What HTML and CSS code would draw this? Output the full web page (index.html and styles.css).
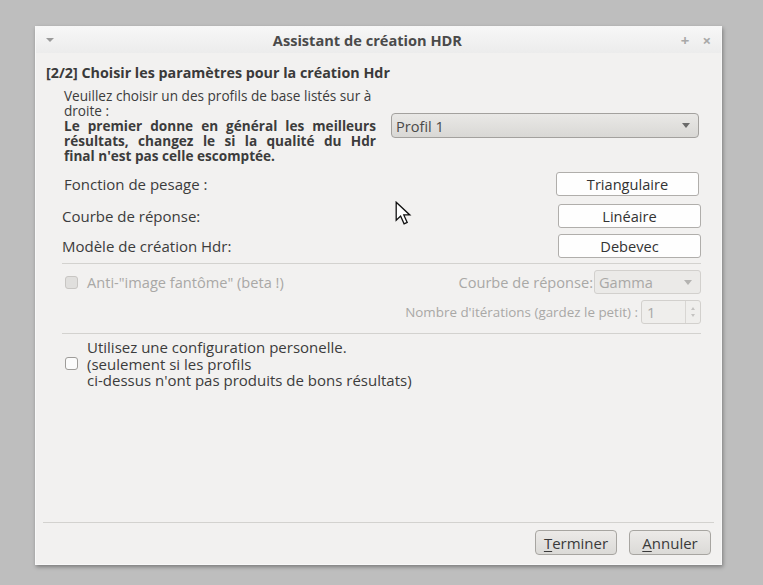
FILE: index.html
```html
<!DOCTYPE html>
<html lang="fr">
<head>
<meta charset="utf-8">
<title>Assistant de création HDR</title>
<link rel="stylesheet" href="styles.css">
</head>
<body>
<div class="window">
  <div class="titlebar">
    <span class="tb-menu"></span>
    <span class="tb-title">Assistant de création HDR</span>
    <span class="tb-btns"><span class="tb-plus">+</span><span class="tb-close">×</span></span>
  </div>
  <div class="content">
    <div class="header">[2/2] Choisir les paramètres pour la création Hdr</div>
    <div class="main">
      <div class="top">
        <div class="intro">
          <div class="intro-plain">Veuillez choisir un des profils de base listés sur à droite :</div>
          <div class="intro-bold">
            <div class="jl">Le premier donne en général les meilleurs</div>
            <div class="jl">résultats, changez le si la qualité du Hdr</div>
            <div>final n'est pas celle escomptée.</div>
          </div>
        </div>
        <div class="combo"><span>Profil 1</span><span class="arrow"></span></div>
      </div>
      <div class="row row1"><span class="lbl">Fonction de pesage :</span><span class="btn">Triangulaire</span></div>
      <div class="row row2"><span class="lbl">Courbe de réponse:</span><span class="btn">Linéaire</span></div>
      <div class="row row3"><span class="lbl">Modèle de création Hdr:</span><span class="btn">Debevec</span></div>
      <div class="sep"></div>
      <div class="ghost">
        <div class="ghost-row1">
          <span class="check dis"></span>
          <span class="dis-txt ghost-lbl">Anti-"image fantôme" (beta !)</span>
          <span class="dis-txt">Courbe de réponse:</span>
          <span class="combo-dis"><span>Gamma</span><span class="arrow dis-arrow"></span></span>
        </div>
        <div class="ghost-row2">
          <span class="dis-txt">Nombre d'itérations (gardez le petit) :</span>
          <span class="spin"><span class="spin-val">1</span><span class="spin-btns"><span class="up"></span><span class="down"></span></span></span>
        </div>
      </div>
      <div class="sep"></div>
      <div class="custom">
        <span class="check"></span>
        <span class="custom-txt">Utilisez une configuration personelle.<br>(seulement si les profils<br>ci-dessus n'ont pas produits de bons résultats)</span>
      </div>
    </div>
    <div class="footer">
      <span class="fbtn"><u>T</u>erminer</span>
      <span class="fbtn"><u>A</u>nnuler</span>
    </div>
  </div>
</div>
<svg class="cursor" width="18" height="25" viewBox="0 0 18 25">
  <path d="M1.2 1.2 L1.2 19.2 L5.6 15 L9.1 22.8 L12.2 21.4 L8.8 13.9 L14.8 13.9 Z" fill="#fff" stroke="#111" stroke-width="1.3" stroke-linejoin="miter"/>
</svg>
</body>
</html>
```
FILE: styles.css
```css
html, body {
  margin: 0;
  padding: 0;
}
body {
  background: #bebebe;
  width: 763px;
  height: 585px;
  overflow: hidden;
  font-family: "Open Sans", "DejaVu Sans", sans-serif;
  color: #3c3c3c;
  position: relative;
}
.window {
  margin: 26px 0 0 35px;
  width: 687px;
  height: 539px;
  background: #f2f1f0;
  box-shadow: 1px 2px 4px rgba(0,0,0,0.35);
  display: flex;
  flex-direction: column;
  box-sizing: border-box;
  border: 1px solid #f8f8f8;
  border-top: none;
}
.titlebar {
  height: 27px;
  flex: none;
  background: linear-gradient(#f7f7f7, #ececec);
  display: flex;
  align-items: center;
  padding: 0 10px;
}
.tb-menu {
  width: 0;
  height: 0;
  border-left: 4px solid transparent;
  border-right: 4px solid transparent;
  border-top: 4px solid #9a9a9a;
  margin-top: 1px;
}
.tb-title {
  flex: 1;
  text-align: center;
  font-weight: bold;
  font-size: 14.6px;
  color: #4a4a4a;
}
.tb-btns {
  display: flex;
  gap: 13px;
  color: #a8a8a8;
  font-size: 15px;
  font-weight: bold;
}
.content {
  flex: 1;
  display: flex;
  flex-direction: column;
}
.header {
  font-weight: bold;
  font-size: 14.3px;
  color: #3a3a3a;
  padding: 10px 0 0 10px;
  line-height: 19px;
}
.main {
  flex: 1;
  padding: 6px 20px 0 26px;
}
.top {
  display: flex;
  align-items: center;
  justify-content: space-between;
  padding-left: 2px;
  padding-right: 2px;
}
.intro {
  width: 312px;
  font-size: 13.6px;
  line-height: 15px;
}
.intro-bold {
  font-weight: bold;
}
.jl {
  text-align: justify;
  text-align-last: justify;
}
.combo {
  width: 308px;
  height: 25px;
  box-sizing: border-box;
  border: 1px solid #a3a19e;
  border-radius: 4px;
  background: linear-gradient(#e9e8e6, #d9d8d5);
  display: flex;
  align-items: center;
  justify-content: space-between;
  padding: 0 8px 0 4px;
  font-size: 14.6px;
  color: #4a4a4a;
}
.arrow {
  width: 0;
  height: 0;
  border-left: 4px solid transparent;
  border-right: 4px solid transparent;
  border-top: 5px solid #6a6a6a;
}
.row {
  display: flex;
  align-items: center;
  justify-content: space-between;
  font-size: 15px;
}
.row1 { margin-top: 9px; padding-left: 2px; padding-right: 2px; }
.row2 { margin-top: 8px; }
.row3 { margin-top: 6px; }
.btn {
  width: 143px;
  height: 24px;
  box-sizing: border-box;
  border: 1px solid #b0aeab;
  border-radius: 3px;
  background: #fefefe;
  display: flex;
  align-items: center;
  justify-content: center;
  font-size: 14.6px;
  color: #333;
}
.sep {
  height: 1px;
  background: #d3d2cf;
  margin-top: 5px;
}
.ghost {
  padding: 6px 0 4px 0;
}
.ghost-row1, .ghost-row2 {
  display: flex;
  align-items: center;
  font-size: 14.6px;
  height: 24px;
}
.ghost-row2 {
  justify-content: flex-end;
  margin-top: 6px;
}
.check {
  width: 13px;
  height: 13px;
  box-sizing: border-box;
  border: 1px solid #9e9c99;
  border-radius: 3px;
  background: #fbfbfb;
  margin-left: 3px;
  flex: none;
}
.check.dis {
  border-color: #c8c6c3;
  background: #e0dfdd;
}
.dis-txt {
  color: #a9a8a6;
}
.ghost-lbl {
  margin-left: 9px;
  flex: 1;
}
.ghost-row2 .dis-txt {
  font-size: 13.4px;
}
.combo-dis {
  width: 107px;
  height: 24px;
  box-sizing: border-box;
  border: 1px solid #d2d0cd;
  border-radius: 3px;
  background: #ebeae8;
  display: flex;
  align-items: center;
  justify-content: space-between;
  padding: 0 8px 0 4px;
  color: #a9a8a6;
  margin-left: 1px;
}
.dis-arrow { border-top-color: #b4b3b1; }
.spin {
  width: 60px;
  height: 24px;
  box-sizing: border-box;
  border: 1px solid #d2d0cd;
  border-radius: 3px;
  background: #efeeec;
  display: flex;
  margin-left: 3px;
  color: #a9a8a6;
}
.spin-val {
  flex: 1;
  display: flex;
  align-items: center;
  padding-left: 5px;
  border-right: 1px solid #d8d6d3;
}
.spin-btns {
  width: 14px;
  display: flex;
  flex-direction: column;
  align-items: center;
  justify-content: space-around;
  padding: 4px 0;
  box-sizing: border-box;
}
.up, .down {
  width: 0; height: 0;
  border-left: 2.5px solid transparent;
  border-right: 2.5px solid transparent;
}
.up { border-bottom: 3px solid #c4c3c1; }
.down { border-top: 3px solid #c4c3c1; }
.custom {
  display: flex;
  align-items: center;
  margin-top: 5px;
}
.custom-txt {
  margin-left: 9px;
  font-size: 15px;
  line-height: 16.5px;
}
.footer {
  flex: none;
  margin: 0 7px;
  border-top: 1px solid #d3d2cf;
  height: 42px;
  display: flex;
  justify-content: flex-end;
  align-items: flex-start;
  gap: 12px;
  padding: 7px 3px 0 0;
  box-sizing: border-box;
}
.fbtn {
  width: 82px;
  height: 25px;
  box-sizing: border-box;
  border: 1px solid #a7a5a1;
  border-radius: 4px;
  background: linear-gradient(#eceae8, #dbdad7);
  display: flex;
  align-items: center;
  justify-content: center;
  font-size: 15px;
  color: #3a3a3a;
}
.fbtn u { text-underline-offset: 2px; }
.cursor {
  position: absolute;
  left: 395px;
  top: 201px;
}
```
